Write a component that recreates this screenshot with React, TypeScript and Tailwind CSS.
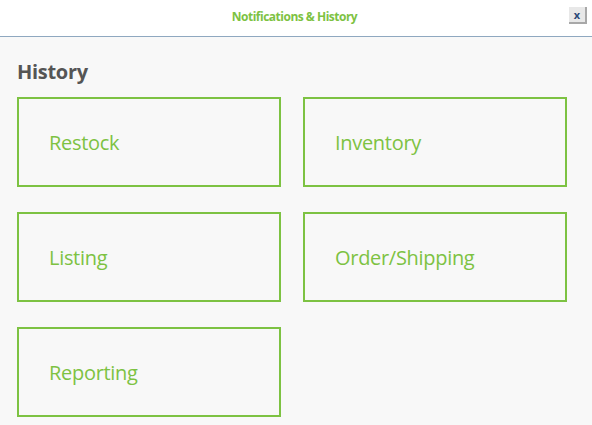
import React from "react";

const items = ["Restock", "Inventory", "Listing", "Order/Shipping", "Reporting"];

export default function App() {
  return (
    <div
      className="w-[592px] h-[425px] bg-[#f8f8f8] overflow-hidden"
      style={{ fontFamily: '"Open Sans", "Noto Sans", sans-serif' }}
    >
      <div className="relative h-[37px] bg-white border-b border-[#8fa8c0] flex items-center justify-center">
        <span className="text-[12px] font-bold text-[#7dc242] tracking-[-0.5px] pr-[3px] pb-[2px]">
          Notifications &amp; History
        </span>
        <button className="absolute left-[569px] top-[7px] w-[18px] h-[17px] bg-[#e8e8e8] border-r-2 border-b-2 border-[#a8a8a8] flex items-center justify-center text-[11px] leading-none font-bold text-[#2c4a78]">
          x
        </button>
      </div>
      <div className="pl-[17px] pt-[22px]">
        <h1 className="text-[20px] leading-[26px] font-bold text-[#555555] tracking-[-0.3px]">History</h1>
        <div className="mt-[12px] grid grid-cols-[264px_264px] gap-x-[22px] gap-y-[25px]">
          {items.map((t) => (
            <div
              key={t}
              className="h-[90px] border-2 border-[#7dc242] flex items-center pl-[30px] pt-[2px]"
            >
              <span className="text-[20px] text-[#7dc242] tracking-[-0.3px]">{t}</span>
            </div>
          ))}
        </div>
      </div>
    </div>
  );
}
